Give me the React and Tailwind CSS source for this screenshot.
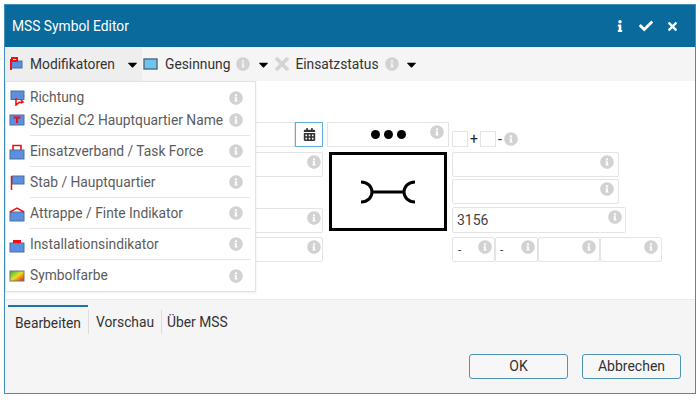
import React from "react";
import { FaInfoCircle, FaInfo, FaCheck, FaTimes, FaCaretDown, FaCalendarAlt } from "react-icons/fa";

const Info = ({ className = "" }) => <FaInfoCircle className={"text-[#d2d2d2] text-[14px] shrink-0 " + className} />;

const Field = ({ className = "", value = "", info = true, pad = "pr-[4px]", text = "text-[14px]", left = "pl-[3px]" }) => (
  <div className={"flex justify-between items-start border border-[#e4e4e4] rounded-[2px] bg-white pt-[1px] " + left + " " + pad + " " + className}>
    <span className={text + " leading-[22px] text-[#444]"}>{value}</span>
    {info && <Info className="mt-[1px]" />}
  </div>
);

const Flag = ({ kind }) => {
  const body = "#5b8fe0";
  const edge = "#4f6f9f";
  const red = "#f01010";
  return (
    <svg width="16" height="16" viewBox="0 0 16 16" className="shrink-0">
      {kind === "mod" && (<><rect x="3" y="5" width="11" height="7" fill={body} stroke={edge} /><path d="M4 2h5v3H4z" fill="none" stroke={red} strokeWidth="2" /><path d="M3 3v11" stroke={red} strokeWidth="2" /></>)}
      {kind === "rich" && (<><rect x="2" y="1" width="13" height="8.5" fill={body} stroke={edge} /><path d="M7 8v7l3-2.5 4-.5M12 10l2 2-2 1" fill="none" stroke={red} strokeWidth="1.6" /></>)}
      {kind === "c2" && (<><rect x="1" y="2" width="14" height="10" fill={body} stroke={edge} /><path d="M4.5 4.5h7M8 4.5V10" stroke={red} strokeWidth="2" /></>)}
      {kind === "task" && (<><rect x="1" y="6" width="14" height="9" fill={body} stroke={edge} /><path d="M4 6V1.5h8V6" fill="none" stroke={red} strokeWidth="1.6" /></>)}
      {kind === "stab" && (<><rect x="3" y="1" width="12" height="8" fill={body} stroke={edge} /><path d="M2.5 1v14" stroke={red} strokeWidth="1.5" /></>)}
      {kind === "fake" && (<><rect x="1" y="6" width="14" height="9" fill={body} stroke={edge} /><path d="M1 6l7-4 7 4" fill="none" stroke={red} strokeWidth="1.5" /></>)}
      {kind === "inst" && (<><rect x="1" y="6" width="14" height="9" fill={body} stroke={edge} /><rect x="4" y="3" width="8" height="3" fill={red} /></>)}
      {kind === "color" && (<>
        <defs><linearGradient id="sf" x1="0" y1="0" x2="1" y2="1"><stop offset="0" stopColor="#22b14c" /><stop offset="0.5" stopColor="#e8e020" /><stop offset="1" stopColor="#ee1010" /></linearGradient></defs>
        <rect x="1" y="3" width="14" height="10" fill="url(#sf)" stroke="#777" /></>)}
      {kind === "ges" && (<rect x="1" y="3" width="13" height="10" fill="#6fc4ee" stroke="#4c6a80" strokeWidth="1.4" />)}
      {kind === "x" && (<path d="M2 2l12 12M14 2L2 14" stroke="#d4d4d4" strokeWidth="3.8" />)}
    </svg>
  );
};

const items = [
  ["rich", "Richtung", "h-[15px]", false],
  ["c2", "Spezial C2 Hauptquartier Name", "h-[31px]", true],
  ["task", "Einsatzverband / Task Force", "h-[31px]", true],
  ["stab", "Stab / Hauptquartier", "h-[31px]", true],
  ["fake", "Attrappe / Finte Indikator", "h-[31px]", true],
  ["inst", "Installationsindikator", "h-[31px]", true],
  ["color", "Symbolfarbe", "h-[31px]", false],
];

export default function App() {
  return (
    <div className="w-[700px] h-[400px] bg-white pt-[4px] pl-[4px]" style={{ fontFamily: "Roboto, sans-serif" }}>
      <div className="relative w-[692px] h-[390px] flex flex-col border border-[#3f8fbd] bg-white">
        <div className="h-[42px] shrink-0 bg-[#0a6a9c] flex items-center pl-[7px] pr-[16px] text-white">
          <span className="text-[13.8px]">MSS Symbol Editor</span>
          <div className="ml-auto flex items-center gap-[13px] text-[12px]">
            <FaInfo />
            <FaCheck className="text-[14px]" />
            <FaTimes className="text-[13px]" />
          </div>
        </div>

        <div className="h-[34px] shrink-0 bg-[#f5f5f5] flex items-center text-[13.8px] text-[#333]">
          <div className="h-full w-[137px] bg-[#eeeeee] flex items-center pl-[3px] shrink-0">
            <Flag kind="mod" />
            <span className="ml-[6px]">Modifikatoren</span>
            <FaCaretDown className="ml-[10px] text-[15px] text-black" />
          </div>
          <div className="ml-[1px] flex items-center">
            <Flag kind="ges" />
            <span className="ml-[6px]">Gesinnung</span>
            <Info className="ml-[6px]" />
            <FaCaretDown className="ml-[6px] text-[15px] text-black" />
          </div>
          <div className="ml-[3px] flex items-center">
            <Flag kind="x" />
            <span className="ml-[5px]">Einsatzstatus</span>
            <Info className="ml-[6px]" />
            <FaCaretDown className="ml-[5px] text-[15px] text-black" />
          </div>
        </div>

        <div className="h-[219px] shrink-0 flex pt-[41px] pl-[4px] border-b border-[#eaeaea]">
          <div className="w-[314px] shrink-0 flex flex-col">
            <div className="flex h-[25px]">
              <div className="flex-1 border border-[#e4e4e4]" />
              <div className="w-[28px] border border-[#5db0e0] flex items-center justify-center">
                <FaCalendarAlt className="text-[13px] text-[#333]" />
              </div>
            </div>
            <Field className="h-[25px] mt-[5px]" pad="pr-[1px]" />
            <Field className="h-[25px] mt-[31px]" pad="pr-[1px]" />
            <Field className="h-[25px] mt-[4px]" pad="pr-[1px]" />
          </div>

          <div className="ml-[4px] w-[122px] shrink-0 flex flex-col items-center">
            <div className="relative w-full h-[25px] border border-[#e4e4e4] flex items-center justify-center gap-[4px]">
              <span className="size-[9px] rounded-full bg-black" />
              <span className="size-[9px] rounded-full bg-black" />
              <span className="size-[9px] rounded-full bg-black" />
              <Info className="absolute right-[4px] top-[2px]" />
            </div>
            <div className="mt-[5px] w-[118px] h-[79px] border-[3px] border-black flex items-center justify-center">
              <svg width="56" height="24" viewBox="0 0 56 24" fill="none" stroke="black" strokeWidth="3">
                <path d="M1 2c7 0 11 5 11 10s-4 10-11 10M12 12h32M55 2c-7 0-11 5-11 10s4 10 11 10" />
              </svg>
            </div>
          </div>

          <div className="ml-[3px] flex flex-col">
            <div className="h-[25px] flex items-end text-[14px] text-[#222] leading-none">
              <span className="size-[16px] border border-[#e4e4e4]" />
              <span className="mx-[2px] mb-[1px]">+</span>
              <span className="size-[16px] border border-[#e4e4e4]" />
              <span className="mx-[2px] mb-[1px]">-</span>
              <Info className="mb-[1px]" />
            </div>
            <Field className="w-[167px] h-[25px] mt-[5px]" />
            <Field className="w-[167px] h-[25px] mt-[2px]" />
            <Field className="w-[174px] h-[26px] mt-[3px]" value="3156" pad="pr-[3px]" left="pl-[4px]" />
            <div className="flex mt-[4px]">
              <Field className="w-[43px] h-[25px]" value="-" text="text-[12px]" pad="pr-[2px]" left="pl-[5px]" />
              <Field className="w-[43px] h-[25px]" value="-" text="text-[12px]" pad="pr-[2px]" left="pl-[4px]" />
              <Field className="w-[62px] h-[25px]" pad="pr-[3px]" />
              <Field className="w-[62px] h-[25px]" pad="pr-[3px]" />
            </div>
          </div>
        </div>

        <div className="flex-1 bg-[#f5f5f5] flex flex-col">
          <div className="flex h-[34px] mt-[5px] ml-[3px] text-[13.8px] text-[#333] items-start">
            <div className="h-full w-[80px] border-t-2 border-[#1c78ac] flex items-center pl-[7px]">Bearbeiten</div>
            <div className="h-[24px] mt-[5px] border-l border-[#dddddd] pl-[7px] pr-[7px] flex items-center">Vorschau</div>
            <div className="h-[24px] mt-[5px] border-l border-[#dddddd] pl-[5px] flex items-center">Über MSS</div>
          </div>
          <div className="flex justify-end gap-[14px] mt-[15px] pr-[14px] text-[14px] text-[#333]">
            <button className="w-[99px] h-[25px] border border-[#4e93bb] rounded-[3px] bg-[#f7f7f7]">OK</button>
            <button className="w-[99px] h-[25px] border border-[#4e93bb] rounded-[3px] bg-[#f7f7f7]">Abbrechen</button>
          </div>
        </div>

        <div className="absolute left-0 top-[76px] w-[251px] bg-white border border-[#e2e2e2] pt-[8px] text-[13.8px] text-[#5c5c5c] flex flex-col shadow-[0_1px_2px_rgba(0,0,0,0.08)]">
          {items.map(([k, label, h, line]) => (
            <div key={label} className={"flex items-center pl-[3px] pr-[7px] " + h}>
              <Flag kind={k} />
              <div className={"flex-1 h-full flex items-center justify-between ml-[5px] -mr-[2px] pr-[7px] " + (line ? "border-b border-[#e6e6e6]" : "")}>
                <span>{label}</span>
                <Info />
              </div>
            </div>
          ))}
        </div>
      </div>
    </div>
  );
}
